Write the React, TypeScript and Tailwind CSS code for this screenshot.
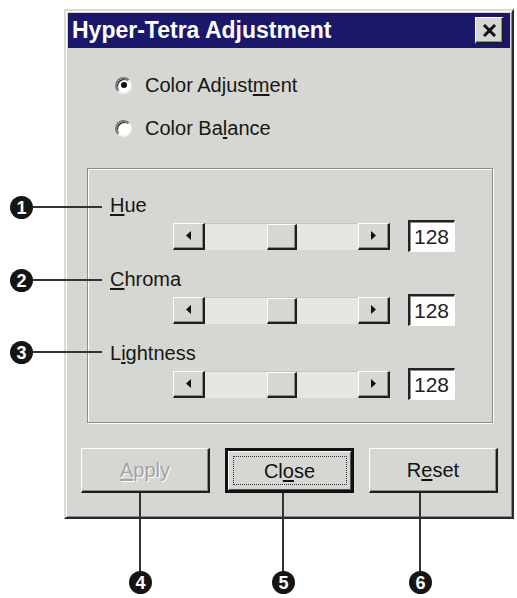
import React from "react";

const raised =
  "border-t border-l border-t-white border-l-white border-b-2 border-r-2 border-b-[#1e1e1e] border-r-[#1e1e1e] shadow-[inset_-1px_-1px_0_#8c8c8a]";

const ArrowButton = ({ dir }: { dir: "left" | "right" }) => (
  <div className={`w-[32px] h-full bg-[#d6d6d2] flex items-center justify-center ${raised}`}>
    <svg width="5" height="9" viewBox="0 0 5 9">
      {dir === "left" ? <path d="M5 0 L0 4.5 L5 9 Z" fill="#111" /> : <path d="M0 0 L5 4.5 L0 9 Z" fill="#111" />}
    </svg>
  </div>
);

const Slider = () => (
  <div className="flex h-[27px] w-[217px] bg-[#e6e6e2]">
    <ArrowButton dir="left" />
    <div className="flex-1 flex pl-[62px] border-t border-t-[#c4c4c0]">
      <div className={`w-[30px] h-full bg-[#d6d6d2] ${raised}`} />
    </div>
    <ArrowButton dir="right" />
  </div>
);

const NumBox = ({ value }: { value: string }) => (
  <div className="w-[47px] h-[32px] bg-white border-t-2 border-l-2 border-t-[#222] border-l-[#222] border-b border-r border-b-white border-r-white shadow-[inset_1px_1px_0_#8c8c8a] flex items-center pl-[4px] text-[21px] text-[#222]">
    {value}
  </div>
);

const Radio = ({ checked }: { checked?: boolean }) => (
  <div className="w-[17px] h-[17px] rounded-full bg-white border-2 border-t-[#7a7a78] border-l-[#7a7a78] border-b-[#f4f4f2] border-r-[#f4f4f2] shadow-[inset_1px_1px_0_#222] flex items-center justify-center">
    {checked && <div className="w-[6px] h-[6px] rounded-full bg-[#111]" />}
  </div>
);

const PushButton = ({ children, primary, disabled }: { children: React.ReactNode; primary?: boolean; disabled?: boolean }) => (
  <div
    className={`w-[129px] h-[45px] bg-[#d6d6d2] flex items-center justify-center text-[20px] ${
      primary ? "border-[3px] border-[#111] shadow-[inset_1px_1px_0_#fff,inset_-1px_-1px_0_#555]" : raised
    } ${disabled ? "text-[#a4a4a0] [text-shadow:1px_1px_0_#fff]" : "text-[#111]"}`}
  >
    {primary ? (
      <div className="w-[114px] h-[29px] border border-dotted border-[#333] flex items-center justify-center">{children}</div>
    ) : (
      children
    )}
  </div>
);

const Callout = ({ n, className }: { n: number; className: string }) => (
  <div
    className={`absolute w-[23px] h-[23px] rounded-full bg-[#151515] text-white font-bold text-[18px] leading-none flex items-center justify-center ${className}`}
  >
    {n}
  </div>
);

export default function App() {
  const rows = [
    { label: <><u className="underline-offset-2">H</u>ue</>, value: "128" },
    { label: <><u className="underline-offset-2">C</u>hroma</>, value: "128" },
    { label: <>L<u className="underline-offset-2">i</u>ghtness</>, value: "128" },
  ];

  return (
    <div className="relative w-[517px] h-[598px] bg-white font-['Liberation_Sans',Arial,sans-serif] pt-[9px] pl-[64px]">
      <div className="w-[450px] h-[510px] bg-[#d6d6d2] border-2 border-t-[#dcdcd8] border-l-[#dcdcd8] border-b-[#2a2a2a] border-r-[#2a2a2a] shadow-[inset_1px_1px_0_#fff,inset_-1px_-1px_0_#8c8c8a] p-[2px] flex flex-col">
        {/* title bar */}
        <div className="h-[35px] bg-[#1b176b] flex items-center justify-between pl-[4px] pr-[6px]">
          <span className="text-white font-bold text-[23px] leading-none">Hyper-Tetra Adjustment</span>
          <div className={`w-[29px] h-[27px] bg-[#d6d6d2] flex items-center justify-center ${raised}`}>
            <svg width="15" height="13" viewBox="0 0 15 13">
              <path d="M2 1 L13 12 M13 1 L2 12" stroke="#111" strokeWidth="3" />
            </svg>
          </div>
        </div>

        {/* body */}
        <div className="flex flex-col pt-[25px] pl-[19px] pr-[17px] text-[20px] text-[#161616]">
          <div className="flex flex-col gap-[19px] pl-[28px]">
            <div className="flex items-center gap-[13px] h-[24px]">
              <Radio checked />
              <span>Color Adjust<u className="underline-offset-2">m</u>ent</span>
            </div>
            <div className="flex items-center gap-[13px] h-[24px]">
              <Radio />
              <span>Color Ba<u className="underline-offset-2">l</u>ance</span>
            </div>
          </div>

          {/* group box */}
          <div className="mt-[28px] h-[255px] border border-[#8c8c8a] shadow-[inset_1px_1px_0_#fff,1px_1px_0_#fff] pt-[24px] pl-[22px]">
            {rows.map((r, i) => (
              <div key={i} className="mb-[15px]">
                <div className="h-[24px] leading-[24px]">{r.label}</div>
                <div className="mt-[3px] ml-[63px] flex items-center gap-[18px]">
                  <Slider />
                  <NumBox value={r.value} />
                </div>
              </div>
            ))}
          </div>

          {/* buttons */}
          <div className="mt-[25px] -ml-[6px] w-[417px] flex justify-between">
            <PushButton disabled>
              <span><u className="underline-offset-2">A</u>pply</span>
            </PushButton>
            <PushButton primary>
              <span>Cl<u className="underline-offset-2">o</u>se</span>
            </PushButton>
            <PushButton>
              <span>R<u className="underline-offset-2">e</u>set</span>
            </PushButton>
          </div>
        </div>
      </div>

      {/* callouts */}
      <div className="absolute left-[33px] top-[206px] w-[69px] h-[2px] bg-[#333]" />
      <div className="absolute left-[33px] top-[279px] w-[69px] h-[2px] bg-[#333]" />
      <div className="absolute left-[33px] top-[351px] w-[69px] h-[2px] bg-[#333]" />
      <Callout n={1} className="left-[10px] top-[196px]" />
      <Callout n={2} className="left-[10px] top-[269px]" />
      <Callout n={3} className="left-[10px] top-[341px]" />

      <div className="absolute left-[139px] top-[493px] w-[2px] h-[80px] bg-[#333]" />
      <div className="absolute left-[282px] top-[493px] w-[2px] h-[80px] bg-[#333]" />
      <div className="absolute left-[419px] top-[493px] w-[2px] h-[80px] bg-[#333]" />
      <Callout n={4} className="left-[129px] top-[571px]" />
      <Callout n={5} className="left-[272px] top-[571px]" />
      <Callout n={6} className="left-[409px] top-[571px]" />
    </div>
  );
}
